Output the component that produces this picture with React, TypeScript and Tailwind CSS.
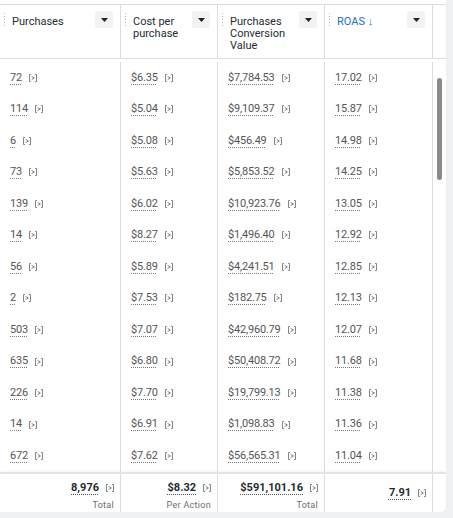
import React from "react";

const rows = [
  ["72", "$6.35", "$7,784.53", "17.02"],
  ["114", "$5.04", "$9,109.37", "15.87"],
  ["6", "$5.08", "$456.49", "14.98"],
  ["73", "$5.63", "$5,853.52", "14.25"],
  ["139", "$6.02", "$10,923.76", "13.05"],
  ["14", "$8.27", "$1,496.40", "12.92"],
  ["56", "$5.89", "$4,241.51", "12.85"],
  ["2", "$7.53", "$182.75", "12.13"],
  ["503", "$7.07", "$42,960.79", "12.07"],
  ["635", "$6.80", "$50,408.72", "11.68"],
  ["226", "$7.70", "$19,799.13", "11.38"],
  ["14", "$6.91", "$1,098.83", "11.36"],
  ["672", "$7.62", "$56,565.31", "11.04"],
];

const widths = ["w-[121px]", "w-[97px]", "w-[107px]", "w-[108px]"];

function CompareIcon() {
  return (
    <svg width="8" height="8" viewBox="0 0 8 8" className="shrink-0">
      <path d="M2 0.5H0.5V7.5H2M6 0.5H7.5V7.5H6" fill="none" stroke="#777" strokeWidth="0.9" />
      <path d="M2.6 2.4L5.4 4L2.6 5.6" fill="none" stroke="#777" strokeWidth="0.9" />
    </svg>
  );
}

function Handle() {
  return (
    <div className="flex flex-col gap-[2px]">
      {[0, 1, 2, 3, 4].map((i) => (
        <span key={i} className="block w-[1px] h-[1px] bg-[#b8b8b8]" />
      ))}
    </div>
  );
}

function Dropdown() {
  return (
    <div className="w-[18px] h-[17px] bg-[#f2f2f2] rounded-[2px] flex items-center justify-center shrink-0">
      <svg width="7" height="4" viewBox="0 0 7 4">
        <path d="M0 0H7L3.5 4Z" fill="#222" />
      </svg>
    </div>
  );
}

function HeaderCell({ w, lines, blue }: { w: string; lines: string[]; blue?: boolean }) {
  return (
    <div className={`${w} h-full border-r border-[#dcdcdc] flex items-start pl-[4px] pr-[7px] pt-[6px]`}>
      <div className="pt-[2px]">
        <Handle />
      </div>
      <div
        className={`flex-1 pl-[7px] pt-[5px] text-[11px] leading-[12px] ${blue ? "text-[#1a6fc9]" : "text-[#1c2b33]"}`}
      >
        {lines.map((l) => (
          <div key={l}>{l}</div>
        ))}
      </div>
      <Dropdown />
    </div>
  );
}

function Value({ v }: { v: string }) {
  return (
    <div className="flex items-center gap-[7px]">
      <span className="text-[11px] text-[#555] tracking-[-0.2px] underline decoration-dotted decoration-[#777] underline-offset-[3px]">
        {v}
      </span>
      <CompareIcon />
    </div>
  );
}

function FooterValue({ v, label }: { v: string; label?: string }) {
  return (
    <div className="flex flex-col items-end">
      <div className="flex items-center gap-[7px]">
        <span className="text-[11px] font-bold text-[#1c2b33] underline decoration-dotted decoration-[#555] underline-offset-[3px]">
          {v}
        </span>
        <CompareIcon />
      </div>
      {label && <div className="text-[9px] text-[#6b6b6b] mt-[2px] tracking-[0.3px]">{label}</div>}
    </div>
  );
}

export default function App() {
  return (
    <div className="w-[453px] h-[518px] bg-[#eef0f2] font-['Roboto',_'Liberation_Sans',_sans-serif]">
      <div className="w-[446px] h-[512px] bg-white rounded-br-[6px] flex flex-col overflow-hidden">
        {/* Header */}
        <div className="mt-[4px] h-[55px] border-y border-[#dcdcdc] flex shrink-0">
          <HeaderCell w={widths[0]} lines={["Purchases"]} />
          <HeaderCell w={widths[1]} lines={["Cost per", "purchase"]} />
          <HeaderCell w={widths[2]} lines={["Purchases", "Conversion", "Value"]} />
          <HeaderCell w={widths[3]} lines={["ROAS \u2193"]} blue />
          <div className="w-[12px]" />
        </div>

        {/* Body */}
        <div className="flex h-[413px] shrink-0">
          <div className="flex flex-col pt-[3px]">
            {rows.map((r, i) => (
              <div key={i} className="flex h-[31.6px]">
                {r.map((v, j) => (
                  <div key={j} className={`${widths[j]} border-r border-[#dcdcdc] flex items-center pl-[10px]`}>
                    <Value v={v} />
                  </div>
                ))}
              </div>
            ))}
          </div>
          <div className="w-[12px] relative">
            <div className="absolute left-[4px] top-[19px] w-[5px] h-[102px] rounded-full bg-[#8a8a8a]" />
          </div>
        </div>

        {/* Footer */}
        <div className="border-t-2 border-[#e4e4e4] h-[40px] flex shrink-0 shadow-[0_-1px_2px_rgba(0,0,0,0.05)]">
          <div className={`${widths[0]} border-r border-[#dcdcdc] flex justify-end pr-[6px] pt-[6px]`}>
            <FooterValue v="8,976" label="Total" />
          </div>
          <div className={`${widths[1]} border-r border-[#dcdcdc] flex justify-end pr-[6px] pt-[6px]`}>
            <FooterValue v="$8.32" label="Per Action" />
          </div>
          <div className={`${widths[2]} border-r border-[#dcdcdc] flex justify-end pr-[6px] pt-[6px]`}>
            <FooterValue v="$591,101.16" label="Total" />
          </div>
          <div className={`${widths[3]} border-r border-[#dcdcdc] flex justify-end items-center pr-[6px]`}>
            <FooterValue v="7.91" />
          </div>
          <div className="w-[12px]" />
        </div>
      </div>
    </div>
  );
}
